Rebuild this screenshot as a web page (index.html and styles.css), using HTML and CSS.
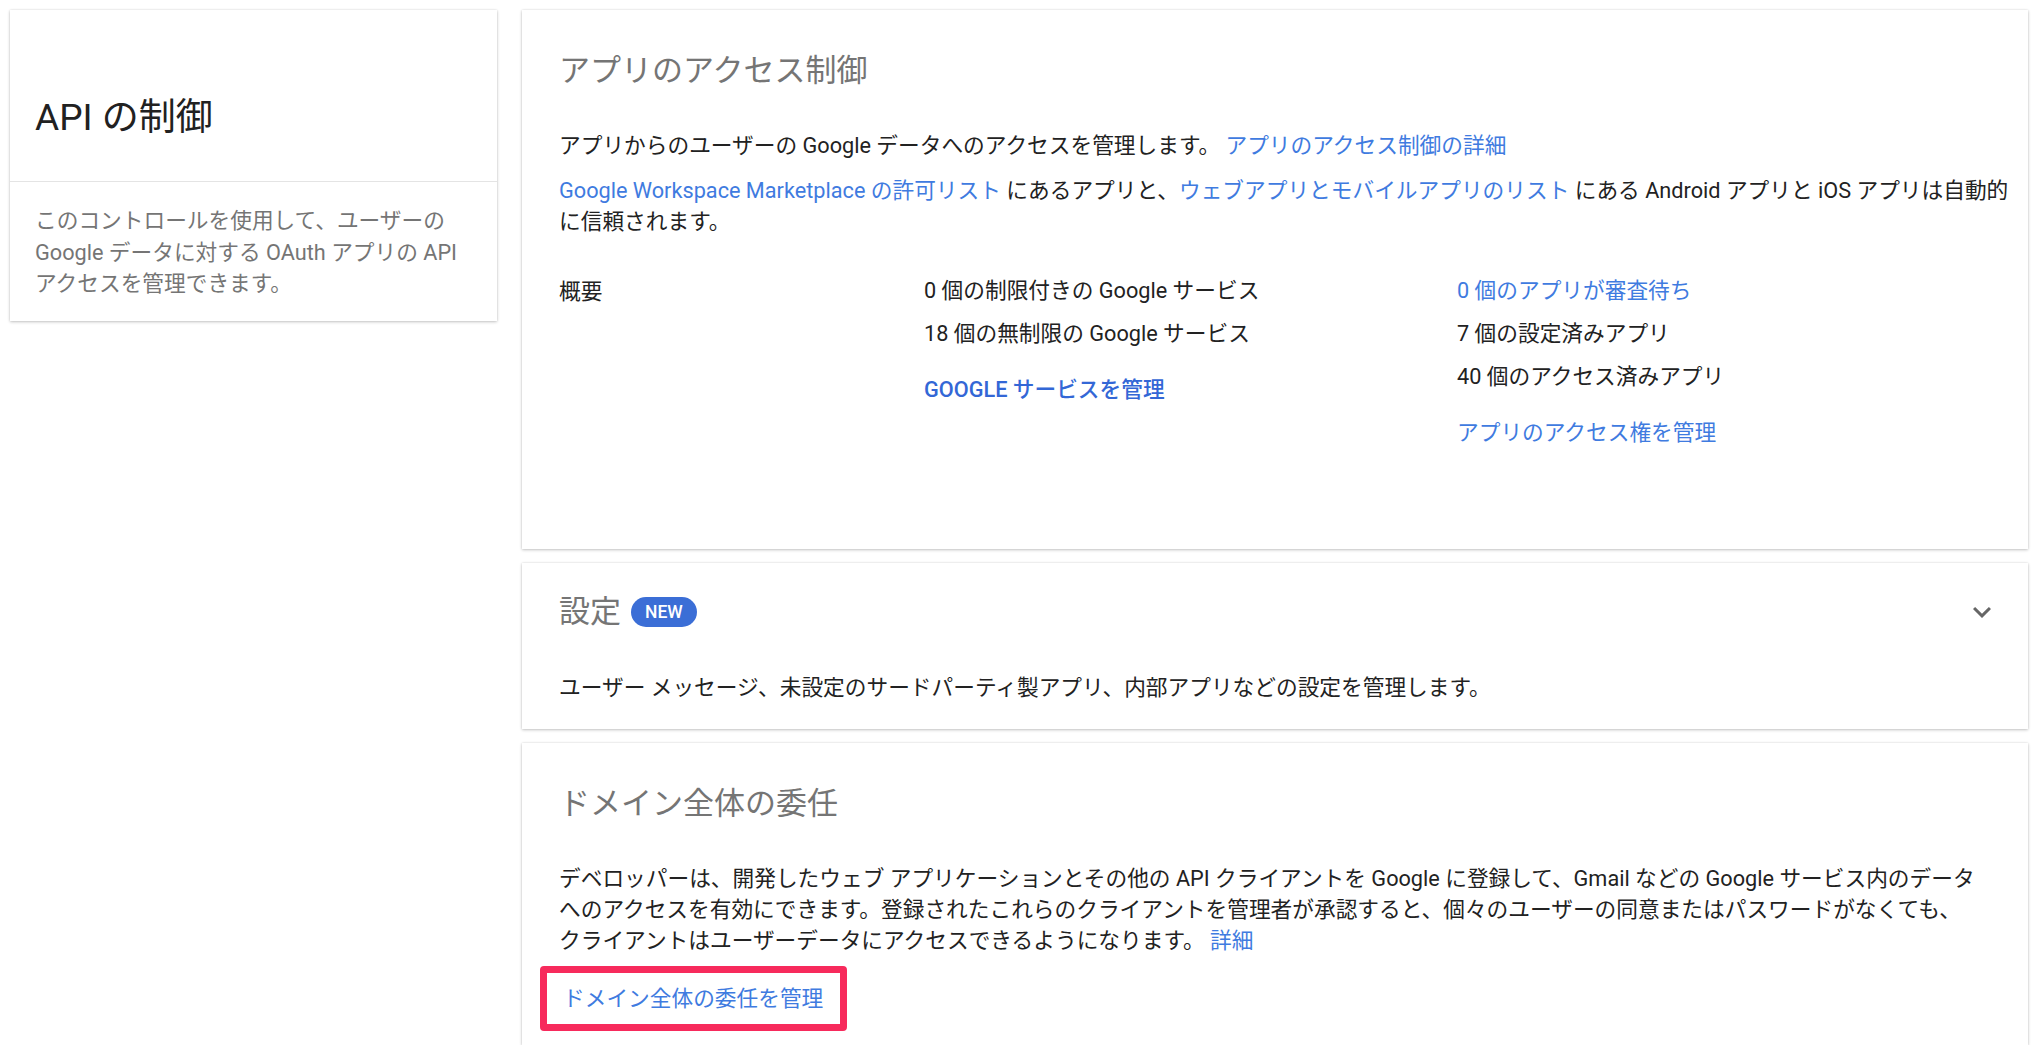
FILE: index.html
```html
<!DOCTYPE html>
<html lang="ja">

<head>
    <meta charset="UTF-8">
    <meta name="viewport" content="width=device-width, initial-scale=1.0">
    <title>API の制御</title>
    <link rel="stylesheet" href="styles.css">
</head>

<body>
    <div class="page">
        <!-- 左側の説明カード -->
        <aside class="card intro">
            <div class="intro-head">
                <h1 class="intro-title">API の制御</h1>
            </div>
            <p class="intro-text">このコントロールを使用して、ユーザーの Google データに対する OAuth アプリの API アクセスを管理できます。</p>
        </aside>

        <main class="sections">
            <!-- アプリのアクセス制御 -->
            <section class="card panel panel-access">
                <h2 class="panel-title">アプリのアクセス制御</h2>
                <p class="lead">アプリからのユーザーの Google データへのアクセスを管理します。 <a href="javascript:;">アプリのアクセス制御の詳細</a></p>
                <p class="lead lead-second"><a href="javascript:;">Google Workspace Marketplace の許可リスト</a> にあるアプリと、<a href="javascript:;">ウェブアプリとモバイルアプリのリスト</a> にある Android アプリと iOS アプリは自動的に信頼されます。</p>
                <div class="overview">
                    <div class="overview-label">概要</div>
                    <ul class="stats">
                        <li>0 個の制限付きの Google サービス</li>
                        <li>18 個の無制限の Google サービス</li>
                        <li class="stats-action"><a class="btn-link" href="javascript:;">GOOGLE サービスを管理</a></li>
                    </ul>
                    <ul class="stats">
                        <li><a href="javascript:;">0 個のアプリが審査待ち</a></li>
                        <li>7 個の設定済みアプリ</li>
                        <li>40 個のアクセス済みアプリ</li>
                        <li class="stats-action"><a href="javascript:;">アプリのアクセス権を管理</a></li>
                    </ul>
                </div>
            </section>

            <!-- 設定 -->
            <section class="card panel panel-settings">
                <div class="panel-head">
                    <h2 class="panel-title">設定<span class="badge">NEW</span></h2>
                    <svg class="expand" viewBox="0 0 24 24" width="36" height="36">
                        <path d="M7.41 8.59L12 13.17l4.59-4.58L18 10l-6 6-6-6 1.41-1.41z"></path>
                    </svg>
                </div>
                <p class="lead">ユーザー メッセージ、未設定のサードパーティ製アプリ、内部アプリなどの設定を管理します。</p>
            </section>

            <!-- ドメイン全体の委任 -->
            <section class="card panel panel-delegation">
                <h2 class="panel-title">ドメイン全体の委任</h2>
                <p class="lead lead-wide">デベロッパーは、開発したウェブ アプリケーションとその他の API クライアントを Google に登録して、Gmail などの Google サービス内のデータへのアクセスを有効にできます。登録されたこれらのクライアントを管理者が承認すると、個々のユーザーの同意またはパスワードがなくても、クライアントはユーザーデータにアクセスできるようになります。 <a href="javascript:;">詳細</a></p>
                <div class="manage-box"><a href="javascript:;">ドメイン全体の委任を管理</a></div>
            </section>
        </main>
    </div>
</body>

</html>
```

FILE: styles.css
```css
body {
    margin: 0;
    background: #ffffff;
    color: #222222;
    font-family: Roboto, "Noto Sans CJK JP", sans-serif;
    font-size: 21.7px;
}

h1,
h2,
p,
ul,
li {
    margin: 0px;
    padding: 0px;
}

ul {
    list-style: none;
}

a {
    color: #3f7be0;
    text-decoration: none;
}

.page {
    display: flex;
    align-items: flex-start;
    gap: 25px;
    padding: 10px 12px 0px 10px;
}

.card {
    background: #ffffff;
    box-shadow: 0px 1px 3px rgba(0, 0, 0, .22), 0px 0px 2px rgba(0, 0, 0, .10);
}

/* 左側 */
.intro {
    width: 487px;
    flex: none;
}

.intro-head {
    padding: 86px 25px 41px 25px;
    border-bottom: 1px solid #e4e4e4;
}

.intro-title {
    font-size: 37px;
    font-weight: 400;
    line-height: 44px;
    color: #212121;
}

.intro-text {
    padding: 23px 25px 21px 25px;
    line-height: 31.5px;
    color: #757575;
}

/* 右側のカード */
.sections {
    flex: 1;
    display: flex;
    flex-direction: column;
    gap: 14px;
}

.panel {
    padding: 41px 12px 0px 37px;
}

.panel-title {
    font-size: 31px;
    font-weight: 400;
    line-height: 40px;
    color: #757575;
    display: flex;
    align-items: center;
}

.lead {
    line-height: 31px;
    margin-top: 39px;
}

.lead-second {
    margin-top: 14px;
}

.overview {
    display: grid;
    grid-template-columns: 365px 533px 1fr;
    margin-top: 38px;
    line-height: 31px;
}

.overview-label {
    padding-top: 1px;
}

.stats li {
    margin-bottom: 12px;
}

.stats li.stats-action {
    margin-top: 25px;
}

.btn-link {
    color: #3367d6;
    font-weight: 500;
}

.panel-access {
    padding-bottom: 89px;
}

.panel-settings {
    padding-top: 29px;
    padding-bottom: 26px;
}

.panel-head {
    display: flex;
    align-items: center;
    justify-content: space-between;
    padding-right: 16px;
}

.badge {
    display: inline-block;
    margin-left: 10px;
    padding: 0px 14px;
    height: 30px;
    line-height: 30px;
    border-radius: 15px;
    background: #3b6ed6;
    color: #ffffff;
    font-size: 17.5px;
    font-weight: 500;
}

.expand {
    fill: #666666;
}

.panel-settings .lead {
    margin-top: 40px;
}

.panel-delegation {
    padding-top: 41px;
    padding-bottom: 14px;
}

.panel-delegation .lead {
    margin-top: 39px;
}

.lead-wide {
    max-width: 1419px;
}

.manage-box {
    display: inline-block;
    margin: 10px 0px 0px -19px;
    padding: 10px 17px 10px 16px;
    line-height: 31px;
    border: 7px solid #f72a5c;
    border-radius: 4px;
}
```
